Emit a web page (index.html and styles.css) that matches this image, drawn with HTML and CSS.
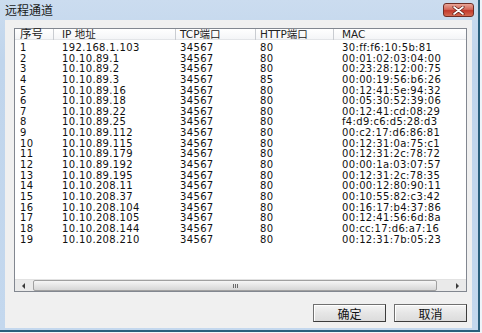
FILE: index.html
```html
<!DOCTYPE html>
<html lang="zh">
<head>
    <meta charset="UTF-8">
    <title>远程通道</title>
    <link rel="stylesheet" href="styles.css">
</head>
<body>
    <div class="window">
        <div class="titlebar">
            <span class="title">远程通道</span>
            <button class="close">
                <svg width="13" height="9" viewBox="0 0 13 9">
                    <path d="M2 1 L11 8 M11 1 L2 8" stroke="#5a1a14" stroke-width="3" stroke-linecap="round"/>
                    <path d="M2 1 L11 8 M11 1 L2 8" stroke="#fff" stroke-width="1.6" stroke-linecap="round"/>
                </svg>
            </button>
        </div>
        <div class="frame">
            <div class="client">
                <div class="list">
                    <div class="list-head">
                        <div class="cell c1">序号</div>
                        <div class="cell c2">IP 地址</div>
                        <div class="cell c3">TCP端口</div>
                        <div class="cell c4">HTTP端口</div>
                        <div class="cell c5">MAC</div>
                    </div>
                    <div class="list-body">
                        <div class="row"><span class="c1">1</span><span class="c2">192.168.1.103</span><span class="c3">34567</span><span class="c4">80</span><span class="c5">30:ff:f6:10:5b:81</span></div>
                        <div class="row"><span class="c1">2</span><span class="c2">10.10.89.1</span><span class="c3">34567</span><span class="c4">80</span><span class="c5">00:01:02:03:04:00</span></div>
                        <div class="row"><span class="c1">3</span><span class="c2">10.10.89.2</span><span class="c3">34567</span><span class="c4">80</span><span class="c5">00:23:28:12:00:75</span></div>
                        <div class="row"><span class="c1">4</span><span class="c2">10.10.89.3</span><span class="c3">34567</span><span class="c4">85</span><span class="c5">00:00:19:56:b6:26</span></div>
                        <div class="row"><span class="c1">5</span><span class="c2">10.10.89.16</span><span class="c3">34567</span><span class="c4">80</span><span class="c5">00:12:41:5e:94:32</span></div>
                        <div class="row"><span class="c1">6</span><span class="c2">10.10.89.18</span><span class="c3">34567</span><span class="c4">80</span><span class="c5">00:05:30:52:39:06</span></div>
                        <div class="row"><span class="c1">7</span><span class="c2">10.10.89.22</span><span class="c3">34567</span><span class="c4">80</span><span class="c5">00:12:41:cd:08:29</span></div>
                        <div class="row"><span class="c1">8</span><span class="c2">10.10.89.25</span><span class="c3">34567</span><span class="c4">80</span><span class="c5">f4:d9:c6:d5:28:d3</span></div>
                        <div class="row"><span class="c1">9</span><span class="c2">10.10.89.112</span><span class="c3">34567</span><span class="c4">80</span><span class="c5">00:c2:17:d6:86:81</span></div>
                        <div class="row"><span class="c1">10</span><span class="c2">10.10.89.115</span><span class="c3">34567</span><span class="c4">80</span><span class="c5">00:12:31:0a:75:c1</span></div>
                        <div class="row"><span class="c1">11</span><span class="c2">10.10.89.179</span><span class="c3">34567</span><span class="c4">80</span><span class="c5">00:12:31:2c:78:72</span></div>
                        <div class="row"><span class="c1">12</span><span class="c2">10.10.89.192</span><span class="c3">34567</span><span class="c4">80</span><span class="c5">00:00:1a:03:07:57</span></div>
                        <div class="row"><span class="c1">13</span><span class="c2">10.10.89.195</span><span class="c3">34567</span><span class="c4">80</span><span class="c5">00:12:31:2c:78:35</span></div>
                        <div class="row"><span class="c1">14</span><span class="c2">10.10.208.11</span><span class="c3">34567</span><span class="c4">80</span><span class="c5">00:00:12:80:90:11</span></div>
                        <div class="row"><span class="c1">15</span><span class="c2">10.10.208.37</span><span class="c3">34567</span><span class="c4">80</span><span class="c5">00:10:55:82:c3:42</span></div>
                        <div class="row"><span class="c1">16</span><span class="c2">10.10.208.104</span><span class="c3">34567</span><span class="c4">80</span><span class="c5">00:16:17:b4:37:86</span></div>
                        <div class="row"><span class="c1">17</span><span class="c2">10.10.208.105</span><span class="c3">34567</span><span class="c4">80</span><span class="c5">00:12:41:56:6d:8a</span></div>
                        <div class="row"><span class="c1">18</span><span class="c2">10.10.208.144</span><span class="c3">34567</span><span class="c4">80</span><span class="c5">00:cc:17:d6:a7:16</span></div>
                        <div class="row"><span class="c1">19</span><span class="c2">10.10.208.210</span><span class="c3">34567</span><span class="c4">80</span><span class="c5">00:12:31:7b:05:23</span></div>
                    </div>
                    <div class="hscroll">
                        <div class="arrow">
                            <svg width="4" height="6" viewBox="0 0 4 6"><path d="M3 0 L0 3 L3 6 Z" fill="#3a3a3a"/></svg>
                        </div>
                        <div class="track">
                            <div class="thumb"><span class="grip"></span></div>
                        </div>
                        <div class="arrow">
                            <svg width="4" height="6" viewBox="0 0 4 6"><path d="M1 0 L4 3 L1 6 Z" fill="#3a3a3a"/></svg>
                        </div>
                    </div>
                </div>
                <div class="buttons">
                    <button class="btn">确定</button>
                    <button class="btn">取消</button>
                </div>
            </div>
        </div>
    </div>
</body>
</html>
```

FILE: styles.css
```css
* {
    margin: 0;
    padding: 0;
    box-sizing: border-box;
}

body {
    background: #c6daee;
}

.window {
    width: 482px;
    height: 333px;
    display: flex;
    flex-direction: column;
    background: linear-gradient(to bottom, #cbdcef, #c0d5ec 60px, #c4d8ee);
    border-right: 2px solid #eef4fa;
    border-bottom: 1px solid #f3f6f9;
    box-shadow: inset -2px -2px 0 #2a5f7c;
}

.titlebar {
    height: 20px;
    display: flex;
    justify-content: space-between;
    align-items: flex-start;
    padding: 0 6px 0 5px;
}

.title {
    font-family: "Noto Sans CJK SC", sans-serif;
    font-size: 12px;
    line-height: 20px;
    color: #1a1a1a;
}

.close {
    width: 31px;
    height: 14px;
    margin-top: 3px;
    border: 1px solid #6e2d26;
    border-radius: 3px;
    background: linear-gradient(to bottom, #e9a598, #d3675a 45%, #c2392c 55%, #d46a52);
    display: flex;
    align-items: center;
    justify-content: center;
}

.frame {
    flex: 1;
    padding: 0 8px 4px 5px;
}

.client {
    height: 100%;
    background: #f0f0f0;
    padding: 8px 5px 0 9px;
    display: flex;
    flex-direction: column;
}

.list {
    height: 264px;
    border: 1px solid #828790;
    background: #fff;
    display: flex;
    flex-direction: column;
    font-family: "DejaVu Sans", "Noto Sans CJK SC", sans-serif;
    font-size: 10px;
    color: #111;
}

.list-head,
.row {
    display: grid;
    grid-template-columns: 39px 122px 80px 78px 1fr;
}

.list-head {
    height: 11px;
    line-height: 11px;
    font-size: 10.5px;
    background: linear-gradient(to bottom, #ffffff, #f4f5f7);
    border-bottom: 1px solid #e3e5e8;
    color: #222;
}

.list-head .cell {
    border-right: 1px solid #c9ccd1;
    white-space: nowrap;
}

.list-head .c1 {
    font-size: 11.5px;
}

.list-head .c5 {
    border-right: none;
}

.c1 {
    padding-left: 5px;
}

.c2 {
    padding-left: 8px;
}

.c3,
.c4 {
    padding-left: 4px;
}

.c5 {
    padding-left: 8px;
}

.list-body {
    flex: 1;
    padding-top: 3px;
}

.row {
    height: 10.65px;
    line-height: 10.65px;
    letter-spacing: 0.35px;
    white-space: nowrap;
}

.hscroll {
    height: 12px;
    display: flex;
    background: #eaeaea;
    border-top: 1px solid #e2e2e2;
}

.arrow {
    width: 18px;
    display: flex;
    align-items: center;
    justify-content: center;
}

.track {
    flex: 1;
    padding-right: 11px;
    display: flex;
}

.thumb {
    flex: 1;
    border: 1px solid #a0a0a0;
    border-radius: 2px;
    background: linear-gradient(to bottom, #f6f6f6, #e6e6e6 50%, #d6d6d6);
    display: flex;
    align-items: center;
    justify-content: center;
}

.grip {
    width: 5px;
    height: 4px;
    border-left: 1px solid #6a6a6a;
    border-right: 1px solid #6a6a6a;
    background: linear-gradient(to right, transparent 1px, #6a6a6a 1px, #6a6a6a 2px, transparent 2px);
}

.buttons {
    margin-top: 12px;
    display: flex;
    justify-content: flex-end;
    gap: 8px;
}

.btn {
    width: 73px;
    height: 18px;
    font-family: "Noto Sans CJK SC", sans-serif;
    font-size: 12px;
    color: #111;
    background: linear-gradient(to bottom, #f4f4f4, #e6e6e6 50%, #dcdcdc);
    border: 1px solid #707070;
    border-right-color: #3c3c3c;
    border-bottom-color: #3c3c3c;
    box-shadow: inset 1px 1px 0 #ffffff;
}
```
